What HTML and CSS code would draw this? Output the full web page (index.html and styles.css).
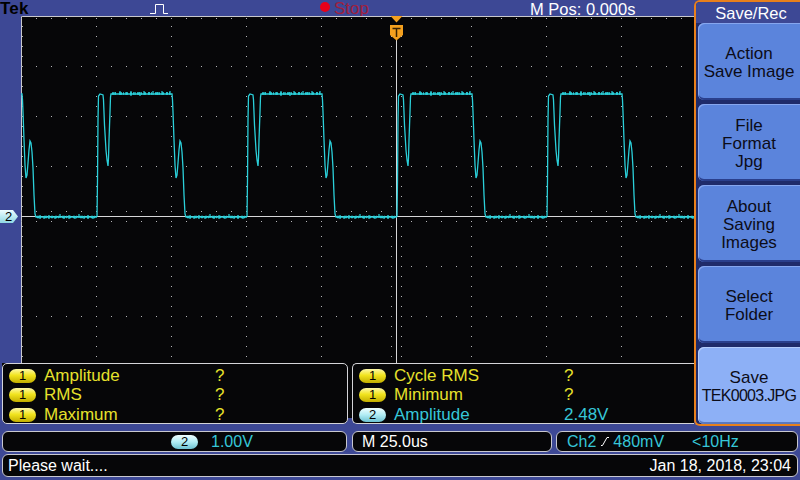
FILE: index.html
```html
<!DOCTYPE html>
<html lang="en">
<head>
    <meta charset="UTF-8">
    <title>Tek - Save/Rec</title>
    <link rel="stylesheet" href="styles.css">
</head>
<body>
<div class="upper">
    <div class="main">
        <div class="topbar">
            <span class="brand">Tek</span>
            <span class="acq">
                <svg width="18" height="11" viewBox="0 0 18 11"><polyline points="0,10.5 5.5,10.5 5.5,1.5 13.5,1.5 13.5,10.5 18,10.5"/></svg>
            </span>
            <span class="run"><i class="dot"></i>Stop</span>
            <span class="mpos">M Pos: 0.000s</span>
        </div>
        <div class="scope">
            <div class="strip"><div class="ch-marker">2</div></div>
            <svg class="screen" width="673" height="347" viewBox="21 16 673 347">
                <defs>
                    <g id="pulse">
                        <path class="tr" d="M0,217 L0.5,180 L1,120 L1.5,96 L3,94 L6,95 L6.5,100 L7.5,125 L9,150 L10,160 L11,166 L11.5,158 L12,140 L13,112 L13.5,97 L14,94 L75,94 L75.5,100 L76,112 L77,140 L78,165 L79,178 L80,175 L81,163 L82,150 L83,141 L84,143 L85,152 L86,168 L87,195 L88,214 L89,217 L150,217"/>
                        <path class="nz" d="M15,93.5 H74 M90,217 H149"/>
                        <path class="sp" d="M18,92v3M23,91v4M29,92v3M34,91v5M38,92v3M43,92v4M47,91v4M52,92v3M56,91v4M61,92v3M65,91v4M70,92v3M73,91v4M93,215v4M97,216v3M102,215v4M108,216v3M113,214v4M117,216v3M122,215v4M128,216v3M132,214v4M137,216v3M141,215v4M146,216v3"/>
                    </g>
                </defs>
                <path class="edge" d="M21.5,363 V16.5 H694"/>
                <line class="dh" x1="21" y1="18.5" x2="694" y2="18.5"/>
                <line class="dv" x1="22.5" y1="16" x2="22.5" y2="363"/>
                <line class="dh" x1="21" y1="66.5" x2="694" y2="66.5"/>
                <line class="dh" x1="21" y1="116.5" x2="694" y2="116.5"/>
                <line class="dh" x1="21" y1="166.5" x2="694" y2="166.5"/>
                <line class="dh" x1="21" y1="211.5" x2="694" y2="211.5"/>
                <line class="dh" x1="21" y1="221.5" x2="694" y2="221.5"/>
                <line class="dh" x1="21" y1="266.5" x2="694" y2="266.5"/>
                <line class="dh" x1="21" y1="316.5" x2="694" y2="316.5"/>
                <line class="dv" x1="96.5" y1="16" x2="96.5" y2="363"/>
                <line class="dv" x1="171.5" y1="16" x2="171.5" y2="363"/>
                <line class="dv" x1="246.5" y1="16" x2="246.5" y2="363"/>
                <line class="dv" x1="321.5" y1="16" x2="321.5" y2="363"/>
                <line class="dv" x1="391.5" y1="16" x2="391.5" y2="363"/>
                <line class="dv" x1="401.5" y1="16" x2="401.5" y2="363"/>
                <line class="dv" x1="471.5" y1="16" x2="471.5" y2="363"/>
                <line class="dv" x1="546.5" y1="16" x2="546.5" y2="363"/>
                <line class="dv" x1="621.5" y1="16" x2="621.5" y2="363"/>
                <line class="ref" x1="21" y1="216.5" x2="694" y2="216.5"/>
                <line class="ref" x1="396.5" y1="40" x2="396.5" y2="363"/>
                <use href="#pulse" x="-53"/>
                <use href="#pulse" x="97"/>
                <use href="#pulse" x="247"/>
                <use href="#pulse" x="397"/>
                <use href="#pulse" x="547"/>
                <path class="trig" d="M390.5,16 H402.5 L396.5,22.5 Z"/>
                <path class="trig" d="M390,25 H403 V35 L396.5,40.5 L390,35 Z"/>
                <path class="trig-t" d="M392.5,28.5 H400.5 M396.5,28.5 V37"/>
            </svg>
        </div>
        <div class="meas">
            <div class="panel left">
                <div class="m-row"><span class="badge yel">1</span><span class="m-name">Amplitude</span><span>?</span></div>
                <div class="m-row"><span class="badge yel">1</span><span class="m-name">RMS</span><span>?</span></div>
                <div class="m-row"><span class="badge yel">1</span><span class="m-name">Maximum</span><span>?</span></div>
            </div>
            <div class="panel right">
                <div class="m-row"><span class="badge yel">1</span><span class="m-name">Cycle RMS</span><span>?</span></div>
                <div class="m-row"><span class="badge yel">1</span><span class="m-name">Minimum</span><span>?</span></div>
                <div class="m-row cyan"><span class="badge cy">2</span><span class="m-name">Amplitude</span><span>2.48V</span></div>
            </div>
        </div>
    </div>
    <div class="menu">
        <div class="menu-title">Save/Rec</div>
        <div class="btn"><span>Action<br>Save Image</span></div>
        <div class="btn"><span>File<br>Format<br>Jpg</span></div>
        <div class="btn"><span>About<br>Saving<br>Images</span></div>
        <div class="btn"><span>Select<br>Folder</span></div>
        <div class="btn sel"><span>Save<br><span class="fname">TEK0003.JPG</span></span></div>
    </div>
</div>
<div class="info">
    <div class="box vert"><span class="badge cy">2</span><span class="volts">1.00V</span></div>
    <div class="box horiz">M 25.0us</div>
    <div class="box trigger">
        <span>Ch2</span>
        <svg class="slope" width="8" height="10" viewBox="0 0 8 10"><polyline points="0,9.5 1.5,9.5 6,1.5 8,1.5"/></svg>
        <span class="level">480mV</span>
        <span class="freq">&lt;10Hz</span>
    </div>
</div>
<div class="status">
    <span>Please wait....</span>
    <span>Jan 18, 2018, 23:04</span>
</div>
</body>
</html>
```

FILE: styles.css
```css
body {
    margin: 0;
    width: 800px;
    height: 480px;
    overflow: hidden;
    background-color: #3d4895;
    font-family: "Liberation Sans", Arial, sans-serif;
    color: #fff;
}
.upper {
    display: flex;
    height: 427px;
}
.main {
    display: flex;
    flex-direction: column;
    width: 694px;
}

/* top status bar */
.topbar {
    display: flex;
    height: 16px;
    padding-top: 1px;
    box-sizing: border-box;
    line-height: 16px;
    font-size: 16.5px;
    white-space: nowrap;
}
.brand {
    width: 150px;
    color: #000;
    font-weight: bold;
    font-size: 17px;
    letter-spacing: .2px;
}
.acq {
    width: 170px;
    padding-top: 2px;
}
.acq svg {
    display: block;
}
.acq polyline {
    fill: none;
    stroke: #fff;
    stroke-width: 1;
}
.run {
    display: flex;
    width: 210px;
    color: #a01f3e;
    font-size: 17px;
}
.dot {
    width: 10px;
    height: 10px;
    margin: 1px 4px 0 0;
    border-radius: 50%;
    background-color: #e8001a;
}

/* graticule */
.scope {
    display: flex;
    height: 347px;
}
.strip {
    position: relative;
    width: 21px;
}
.ch-marker {
    position: absolute;
    left: 0;
    top: 194px;
    width: 18px;
    height: 13px;
    padding-left: 5px;
    box-sizing: border-box;
    clip-path: polygon(0 0, 13px 0, 18px 50%, 13px 100%, 0 100%);
    background: linear-gradient(#eefdff, #8fd8e4);
    color: #000;
    font-size: 13px;
    line-height: 13px;
}
.screen {
    display: block;
    background-color: #060608;
}
.screen .edge {
    fill: none;
    stroke: #c8c8cc;
    stroke-width: 1;
}
.screen .dh,
.screen .dv {
    stroke: #b4b4b8;
    stroke-width: 1;
    shape-rendering: crispEdges;
}
.screen .dh {
    stroke-dasharray: 1 14;
}
.screen .dv {
    stroke-dasharray: 1 9;
}
.screen .ref {
    stroke: #d6d6d8;
    stroke-width: 1;
}
.tr {
    fill: none;
    stroke: #2bcfd9;
    stroke-width: 1.3;
}
.nz {
    fill: none;
    stroke: #2bcfd9;
    stroke-width: 2.5;
    stroke-dasharray: 2 1 1 3 3 1 1 2 2 2;
}
.sp {
    fill: none;
    stroke: #2bcfd9;
    stroke-width: 1.2;
}
.trig {
    fill: #f4a01e;
}
.trig-t {
    fill: none;
    stroke: #3a2200;
    stroke-width: 1.5;
}

/* measurements */
.meas {
    display: flex;
    gap: 4px;
    height: 64px;
    padding-bottom: 3px;
    box-sizing: border-box;
    border-left: 2px solid #3d4895;
    background: linear-gradient(#060608 55px, #3d4895 55px);
}
.panel {
    height: 61px;
    padding: 2px 0 0 6px;
    box-sizing: border-box;
    border: 1px solid #d4d4d8;
    border-radius: 5px;
    background-color: #060608;
}
.panel.left {
    width: 346px;
}
.panel.right {
    flex: 1;
    border-right: none;
    border-radius: 5px 0 0 5px;
}
.m-row {
    display: flex;
    align-items: center;
    height: 19.5px;
    font-size: 17px;
    color: #e6e12c;
    white-space: nowrap;
}
.m-row.cyan {
    color: #36c7d8;
}
.m-name {
    width: 171px;
    margin-left: 8px;
}
.right .m-name {
    width: 170px;
}
.badge {
    display: inline-block;
    width: 27px;
    height: 14px;
    border-radius: 7px;
    color: #000;
    font-size: 13px;
    line-height: 14px;
    text-align: center;
}
.badge.yel {
    background: linear-gradient(#fdf8a8, #f2e41e 45%, #c2ae00);
}
.badge.cy {
    background: linear-gradient(#f0ffff, #b0ecf4 50%, #6cc2d2);
}

/* side menu */
.menu {
    display: flex;
    flex-direction: column;
    width: 106px;
    height: 426px;
    box-sizing: border-box;
    border: 2px solid #e8801c;
    border-right: none;
    border-radius: 6px 0 0 6px;
    background-color: #1f2b6a;
    overflow: hidden;
}
.menu-title {
    height: 21px;
    padding-left: 6px;
    background-color: #3d4895;
    font-size: 16.5px;
    line-height: 22px;
    text-align: center;
}
.btn {
    display: flex;
    align-items: center;
    justify-content: center;
    height: 77px;
    flex-shrink: 0;
    margin-left: 2px;
    padding-top: 3px;
    box-sizing: border-box;
    border-radius: 6px 0 0 6px;
    background-color: #5b84dc;
    box-shadow: inset 1px 1px 0 #86a6ee, inset 0 -2px 0 #2a3f8c;
    color: #0c0c18;
    font-size: 17px;
    line-height: 18px;
    text-align: center;
}
.btn + .btn {
    margin-top: 4px;
}
.btn.sel {
    background-color: #8db0f6;
    box-shadow: inset 1px 1px 0 #b4ccfa, inset 0 -2px 0 #5a78c0;
}
.fname {
    font-size: 16px;
    letter-spacing: -.7px;
    white-space: nowrap;
}

/* bottom readouts */
.info {
    display: flex;
    height: 21px;
    margin: 4px 2px 0;
}
.box {
    display: flex;
    align-items: center;
    box-sizing: border-box;
    border: 1px solid #c8c8d0;
    border-radius: 6px;
    background-color: #060608;
    font-size: 16px;
    white-space: nowrap;
}
.box.vert {
    width: 345px;
    padding-left: 168px;
    color: #36c7d8;
}
.volts {
    margin-left: 13px;
}
.box.horiz {
    width: 200px;
    margin-left: 5px;
    padding-left: 9px;
}
.box.trigger {
    flex: 1;
    margin-left: 4px;
    padding-left: 10px;
    color: #36c7d8;
}
.slope {
    margin: 0 0 2px 5px;
}
.slope polyline {
    fill: none;
    stroke: #fff;
    stroke-width: 1;
}
.level {
    margin-left: 4px;
}
.freq {
    margin-left: 28px;
}
.status {
    display: flex;
    justify-content: space-between;
    align-items: center;
    height: 23px;
    margin: 2px 2px 0;
    padding: 0 6px 0 5px;
    box-sizing: border-box;
    border: 1px solid #c8c8d0;
    border-radius: 6px;
    background-color: #060608;
    font-size: 16px;
}
```
